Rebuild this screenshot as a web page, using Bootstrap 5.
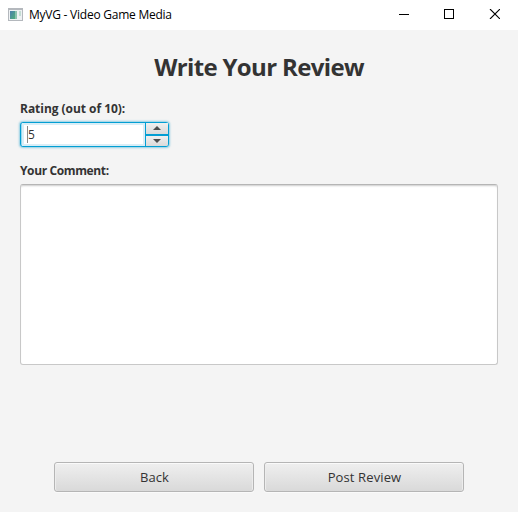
<!DOCTYPE html>
<html lang="en">
<head>
<meta charset="utf-8">
<meta name="viewport" content="width=device-width, initial-scale=1">
<title>MyVG - Video Game Media</title>
<link href="https://cdn.jsdelivr.net/npm/bootstrap@5.3.0/dist/css/bootstrap.min.css" rel="stylesheet">
<style>
  body { font-family: "Open Sans", "Noto Sans", sans-serif; background: #f4f4f4; color: #333; font-size: 12px; height: 512px; }
  .titlebar { height: 30px; color: #000; padding-right: 1px; }
  .app-icon { margin: 0 6px 2px 8px; }
  .app-title { font-size: 12px; line-height: 30px; letter-spacing: -.24px; }
  .win-btn { width: 45px; height: 28px; background: none; color: #000; }
  .review { padding: 20px; }
  .review h1 { font-size: 24px; line-height: 34px; letter-spacing: -.65px; margin: 0 0 17px; color: #333; }
  .field-label { font-size: 12px; line-height: 16px; margin: 0; }
  .label-rating { letter-spacing: -.04px; }
  .label-comment { letter-spacing: -.38px; }
  .spinner { width: 149px; height: 25px; margin: 5px 0 16px; border: 1px solid #039ed3; border-radius: 3px; box-shadow: 0 0 2px 1px #0096c966, inset 0 0 0 1px #039ed366; background: #fff; }
  .spinner-value { box-shadow: inset 0 0 0 2px #d9eef7; padding-left: 5px; font-size: 12px; margin: 0 0 0 1px; }
  .caret { width: 1px; height: 17px; background: #888; }
  .steps { width: 23px; border-left: 1px solid #039ed3; }
  .step { background: linear-gradient(#f0f0f0, #dadada); border: 0; }
  .step:last-child { border-radius: 0 0 2px 0; }
  .step + .step { border-top: 2px solid #039ed3; }
  .comment { height: 181px; margin-top: 5px; resize: none; border: 1px solid #c8c8c8; border-top-color: #b5b5b5; border-radius: 3px; box-shadow: inset 0 2px 2px -1px #ccc; background: #fff; }
  .actions { gap: 10px; }
  .action { width: 200px; height: 30px; font-size: 13px; line-height: 28px; letter-spacing: .12px; color: #333; border: 1px solid #b5b5b5; border-radius: 3px; background: linear-gradient(#efefef, #d9d9d9); box-shadow: inset 0 1px 0 #fafafa, inset 1px 0 0 #ececec, inset -1px 0 0 #ececec, 0 1px 0 #fafafa; }
  .action span { padding-left: 1px; }
</style>
</head>
<body class="d-flex flex-column overflow-hidden">
<header class="titlebar d-flex bg-white flex-shrink-0">
  <div class="d-flex align-items-center flex-grow-1">
    <svg class="app-icon" width="15" height="13" viewBox="0 0 15 13" aria-hidden="true">
      <defs><linearGradient id="pane" x2="1" y2="1"><stop stop-color="#4c7fae"/><stop offset="1" stop-color="#4fae7b"/></linearGradient></defs>
      <path fill="#b4b8bd" d="M0 0h15v13H0z"/><path fill="#eef1f3" d="M1 2h13v10H1z"/>
      <path fill="url(#pane)" d="M2 3h5v8H2z"/><path fill="#8cc3ae" d="M7 3h2v8H7z"/><path fill="#c4ddd3" d="M11 3h2v5h-2z"/>
    </svg>
    <span class="app-title">MyVG - Video Game Media</span>
  </div>
  <button class="win-btn border-0 p-0 d-flex align-items-center justify-content-center" aria-label="Minimize"><svg width="11" height="10" shape-rendering="crispEdges"><path fill="#000" d="M0 5h10v1H0z"/></svg></button>
  <button class="win-btn border-0 p-0 d-flex align-items-center justify-content-center" aria-label="Maximize"><svg width="11" height="10" shape-rendering="crispEdges"><path fill="none" stroke="#000" d="M.5.5h9v9h-9z"/></svg></button>
  <button class="win-btn border-0 p-0 d-flex align-items-center justify-content-center" aria-label="Close"><svg width="11" height="10"><path stroke="#000" stroke-width="1.1" d="M1 0l10 10M11 0L1 10"/></svg></button>
</header>
<main class="review d-flex flex-column flex-grow-1">
  <h1 class="fw-bold text-center">Write Your Review</h1>
  <label class="field-label label-rating fw-bold" for="rating">Rating (out of 10):</label>
  <div class="spinner d-flex" id="rating">
    <div class="spinner-value d-flex align-items-center flex-grow-1"><span class="caret"></span><span>5</span></div>
    <div class="steps d-flex flex-column">
      <button class="step flex-fill p-0 d-flex align-items-center justify-content-center" aria-label="Increase"><svg width="8" height="4"><path fill="#4d4d4d" d="M0 4l4-4 4 4z"/></svg></button>
      <button class="step flex-fill p-0 d-flex align-items-center justify-content-center" aria-label="Decrease"><svg width="8" height="4"><path fill="#4d4d4d" d="M0 0l4 4 4-4z"/></svg></button>
    </div>
  </div>
  <label class="field-label label-comment fw-bold" for="comment">Your Comment:</label>
  <textarea class="comment w-100" id="comment"></textarea>
  <div class="d-flex justify-content-center mt-auto actions">
    <button class="action p-0"><span>Back</span></button>
    <button class="action p-0"><span>Post Review</span></button>
  </div>
</main>
<script src="https://cdn.jsdelivr.net/npm/bootstrap@5.3.0/dist/js/bootstrap.bundle.min.js"></script>
</body>
</html>
